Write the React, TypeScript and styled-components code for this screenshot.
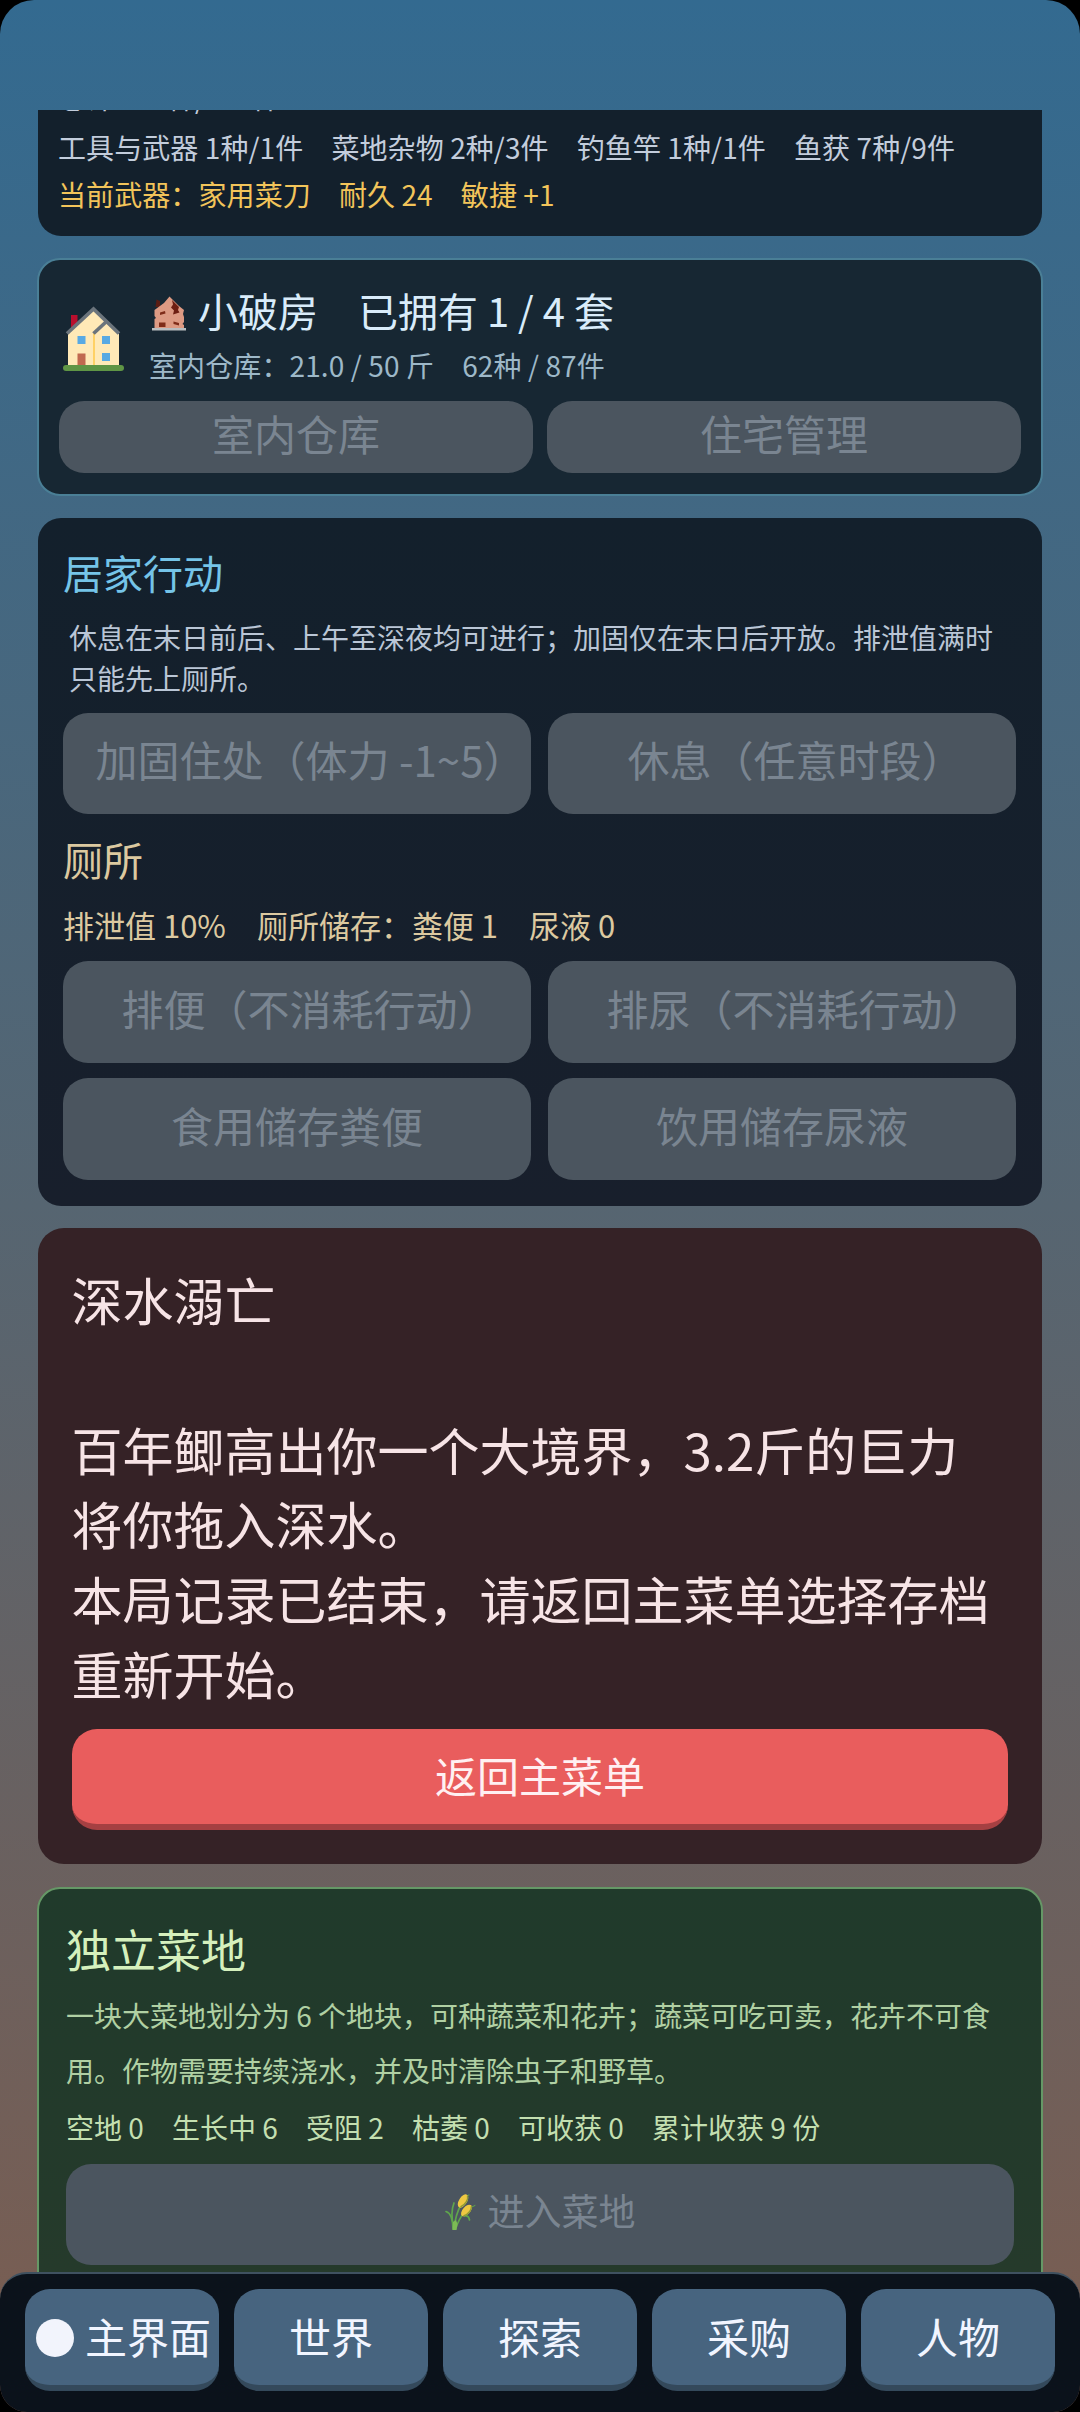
import React from "react";
import styled, { createGlobalStyle, css } from "styled-components";

const GlobalStyle = createGlobalStyle`
  *, *::before, *::after { box-sizing: border-box; }
  html, body { margin: 0; padding: 0; background: #000; }
  body { font-family: "Noto Sans CJK SC", "Noto Sans", sans-serif; }
  button { font: inherit; margin: 0; }
`;

const Screen = styled.div`
  width: 1080px;
  height: 2412px;
  display: flex;
  flex-direction: column;
  overflow: hidden;
  border-radius: 34px 34px 27px 27px;
  background: linear-gradient(180deg, #336a90 0px, #566571 1206px, #7b5d50 2412px);
`;

const Feed = styled.main`
  flex: 1;
  min-height: 0;
  overflow: hidden;
  margin-top: 110px;
  padding: 0 37px;
  display: flex;
  flex-direction: column;
  gap: 22px;
`;

const Card = styled.section`
  flex: none;
  margin: 0 1px;
  border-radius: 23px;
  background: linear-gradient(180deg, #13202c, #181f2c);
  display: flex;
  flex-direction: column;
`;

const BagCard = styled(Card)`
  height: 126px;
  overflow: hidden;
  justify-content: flex-end;
  border-radius: 0 0 23px 23px;
  padding: 0 20px 18px;
  background: #13202c;
`;

const HouseCard = styled(Card)`
  height: 238px;
  margin: 0;
  border: 2px solid #4a7f96;
  background: #172733;
  padding: 23px 20px 0;
`;

const HomeCard = styled(Card)`
  height: 688px;
  padding: 29px 26px 0 25px;
`;

const DeathCard = styled(Card)`
  height: 636px;
  border-radius: 26px;
  padding: 34px 34px 0;
  background: #352226;
`;

const FieldCard = styled(Card)`
  height: 460px;
  margin: 1px 0 0;
  border: 2px solid #659866;
  background: linear-gradient(180deg, #203a2b, #263a2b);
  padding: 32px 27px 0;
`;

const Line = styled.p<{
  $size: number;
  $lh: number;
  $color: string;
  $top?: number;
  $indent?: number;
  $track?: number;
}>`
  margin: ${(p) => p.$top ?? 0}px 0 0 ${(p) => p.$indent ?? 0}px;
  font-size: ${(p) => p.$size}px;
  line-height: ${(p) => p.$lh}px;
  letter-spacing: ${(p) => p.$track ?? 0}px;
  color: ${(p) => p.$color};
  white-space: pre;
`;

const HouseHeader = styled.div`
  display: flex;
  gap: 25px;
  padding-left: 4px;
  height: 118px;
`;

const HouseFigure = styled.div`
  width: 61px;
  height: 65px;
  margin-top: 23px;
  svg { display: block; }
`;

const HouseTitle = styled.div`
  display: flex;
  align-items: center;
  padding-left: 3px;
  gap: 12px;
  height: 54px;
`;

const ButtonRow = styled.div<{ $gap: number; $top?: number }>`
  display: grid;
  grid-template-columns: 1fr 1fr;
  gap: 15px ${(p) => p.$gap}px;
  margin-top: ${(p) => p.$top ?? 0}px;
`;

const buttonBase = css`
  display: flex;
  align-items: center;
  justify-content: center;
  border: 0;
  border-radius: 25px;
  white-space: pre;
  line-height: 1.4;
`;

const DisabledButton = styled.button<{ $h: number; $size?: number; $top?: number }>`
  ${buttonBase}
  height: ${(p) => p.$h}px;
  margin-top: ${(p) => p.$top ?? 0}px;
  padding: 0 0 8px;
  font-size: ${(p) => p.$size ?? 42}px;
  background: #4b555f;
  color: #7a8591;
`;

/* A closing full-width bracket keeps half an em of blank space; pull it back so the label is centred. */
const BracketLabel = styled.span`
  margin-right: -27px;
`;

const DangerButton = styled.button`
  ${buttonBase}
  height: 101px;
  margin-top: 18px;
  padding: 0 0 2px;
  font-size: 42px;
  color: #fff0f2;
  background: #e95d5d;
  border-bottom: 6px solid #a54042;
`;

const NavBar = styled.nav`
  flex: none;
  height: 140px;
  display: grid;
  grid-template-columns: repeat(5, 1fr);
  gap: 15px;
  padding: 15px 25px 21px;
  background: #0b121b;
  border-top: 2px solid #3f5160;
  border-radius: 27px 27px 0 0;
`;

const NavButton = styled.button<{ $active?: boolean }>`
  ${buttonBase}
  gap: 11px;
  padding: 0 0 2px ${(p) => (p.$active ? 3 : 0)}px;
  font-size: 42px;
  color: #f1f5ff;
  background: #47647f;
  border-bottom: 6px solid #34495b;
`;

const ActiveDot = styled.span`
  flex: none;
  width: 38px;
  height: 38px;
  margin-top: 3px;
  border-radius: 50%;
  background: #f2f4fc;
`;

const RuinSvg = styled.svg`
  flex: none;
  margin-top: 6px;
`;

const WheatSvg = styled.svg`
  flex: none;
  margin: 4px 12px 0 0;
`;

const HouseIcon = () => (
  <svg width="61" height="65" viewBox="0 0 61 65">
    <rect x="8" y="9" width="6.5" height="15" fill="#b90f2e" />
    <path d="M5 27 30.5 3 42 15l14 13v32H5z" fill="#ffe9b7" />
    <path d="M31 27v33" stroke="#ffcf5c" strokeWidth="1.8" />
    <path d="M4 27.500 30.500 3 56 27.500" fill="none" stroke="#6b747c" strokeWidth="3.700" strokeLinejoin="miter" />
    <path d="M30.500 27.500 43.500 15.500" stroke="#6b747c" strokeWidth="3.700" />
    <rect x="14.500" y="30" width="8" height="8" fill="#58a9e3" />
    <rect x="39" y="30" width="8" height="8" fill="#58a9e3" />
    <rect x="39" y="47" width="8" height="8" fill="#58a9e3" />
    <rect x="14.500" y="47.500" width="8" height="12" fill="#c1694f" />
    <rect x="0" y="59" width="61" height="6" rx="3" fill="#5f9545" />
  </svg>
);

const RuinIcon = () => (
  <RuinSvg width="34" height="35" viewBox="0 0 34 35">
    <path d="M4.500 3.500 8 5v6H3.500z" fill="#5a1d14" />
    <path d="M2.500 32V23l1.500-1-1.500-2v-6L12 7l5.500-6.500L22 5l5 5 5 4-1 4 1 3v5l-1.500 2 1.500 1v3z" fill="#dd9a83" />
    <path d="M20 4l7 7-1 3 1.500 2.500-6.500 2 1-4-3-3 2-3z" fill="#6e1f12" />
    <path d="M8 16.500l5-1.500.500 2.500-5.500 1.500zM7 26.500h6.500v4.500H7zM21.500 25.500l5.500 1.500v2.500l-5.500-1.500z" fill="#7f2c19" />
    <rect x="0" y="32" width="34" height="2.500" fill="#b9bdc0" />
  </RuinSvg>
);

const WheatIcon = () => (
  <WheatSvg width="31" height="37" viewBox="0 0 31 37">
    <g fill="none" stroke="#5fa64c" strokeWidth="1.700" strokeLinecap="round">
      <path d="M9 35C10 26 11 19 16 11" />
      <path d="M10.500 35C13 28 15 23 19 19" />
      <path d="M8 35C8 26 5.500 19 1 17.500" />
      <path d="M8.500 33C6 22 7 14 9 9" />
      <path d="M20 22c3-.500 4 1 4.500 4" />
      <path d="M24 14c2-.500 4-1.500 6-2.500M20 4c1-2 2-2.500 4-3" strokeWidth="1" />
    </g>
    <path d="M7.500 36 8 28l3-2 1.500 4-1 6z" fill="#7dbb55" />
    <ellipse cx="18" cy="7" rx="4" ry="7.500" transform="rotate(32 18 7)" fill="#efc842" />
    <ellipse cx="21.500" cy="16.500" rx="3.800" ry="7" transform="rotate(42 21.500 16.500)" fill="#efc842" />
    <path d="M22.500 1.500c1 4-2 9-7 11.500M26.500 12c0 4-3 8-8 10" stroke="#8f9a35" strokeWidth="1.400" fill="none" />
  </WheatSvg>
);

const tabs = ["主界面", "世界", "探索", "采购", "人物"];

export default function App() {
  return (
    <>
      <GlobalStyle />
      <Screen>
        <Feed>
          <BagCard>
            <Line $size={28} $lh={51} $color="#c3cddc">{"总计 162种/187件"}</Line>
            <Line $size={28} $lh={48} $track={0.09} $color="#c3cddc">
              {"工具与武器 1种/1件　菜地杂物 2种/3件　钓鱼竿 1种/1件　鱼获 7种/9件"}
            </Line>
            <Line $size={28} $lh={47} $track={0.09} $color="#f2c45a">{"当前武器：家用菜刀　耐久 24　敏捷 +1"}</Line>
          </BagCard>

          <HouseCard>
            <HouseHeader>
              <HouseFigure>
                <HouseIcon />
              </HouseFigure>
              <div>
                <HouseTitle>
                  <RuinIcon />
                  <Line $size={40} $lh={54} $color="#d9ecfa">{"小破房　已拥有 1 / 4 套"}</Line>
                </HouseTitle>
                <Line $size={28} $lh={36} $top={10} $track={0.11} $color="#9db8c8">
                  {"室内仓库：21.0 / 50 斤　62种 / 87件"}
                </Line>
              </div>
            </HouseHeader>
            <ButtonRow $gap={14}>
              <DisabledButton disabled $h={72}>室内仓库</DisabledButton>
              <DisabledButton disabled $h={72}>住宅管理</DisabledButton>
            </ButtonRow>
          </HouseCard>

          <HomeCard>
            <Line $size={40} $lh={50} $color="#75c4e8">居家行动</Line>
            <Line $size={28} $lh={41} $top={20} $indent={6} $color="#bac6d6">
              {"休息在末日前后、上午至深夜均可进行；加固仅在末日后开放。排泄值满时\n只能先上厕所。"}
            </Line>
            <ButtonRow $gap={17} $top={14}>
              <DisabledButton disabled $h={101}>
                <BracketLabel>加固住处（体力 -1~5）</BracketLabel>
              </DisabledButton>
              <DisabledButton disabled $h={101}>
                <BracketLabel>休息（任意时段）</BracketLabel>
              </DisabledButton>
            </ButtonRow>
            <Line $size={40} $lh={50} $top={20} $color="#dcc9a0">厕所</Line>
            <Line $size={31} $lh={42} $top={20} $color="#dcc9a0">{"排泄值 10%　厕所储存：粪便 1　尿液 0"}</Line>
            <ButtonRow $gap={17} $top={15}>
              <DisabledButton disabled $h={102}>
                <BracketLabel>排便（不消耗行动）</BracketLabel>
              </DisabledButton>
              <DisabledButton disabled $h={102}>
                <BracketLabel>排尿（不消耗行动）</BracketLabel>
              </DisabledButton>
              <DisabledButton disabled $h={102}>食用储存粪便</DisabledButton>
              <DisabledButton disabled $h={102}>饮用储存尿液</DisabledButton>
            </ButtonRow>
          </HomeCard>

          <DeathCard>
            <Line $size={51} $lh={74.8} $indent={-0.5} $color="#f7e4e6">
              {"深水溺亡\n\n百年鲫高出你一个大境界，3.2斤的巨力\n将你拖入深水。\n本局记录已结束，请返回主菜单选择存档\n重新开始。"}
            </Line>
            <DangerButton>返回主菜单</DangerButton>
          </DeathCard>

          <FieldCard>
            <Line $size={45} $lh={56} $color="#d5f0bd">独立菜地</Line>
            <Line $size={28} $lh={55} $top={11} $color="#b0d0a3">
              {"一块大菜地划分为 6 个地块，可种蔬菜和花卉；蔬菜可吃可卖，花卉不可食\n用。作物需要持续浇水，并及时清除虫子和野草。"}
            </Line>
            <Line $size={28} $lh={36} $top={11} $track={0.03} $color="#c3dfb0">
              {"空地 0　生长中 6　受阻 2　枯萎 0　可收获 0　累计收获 9 份"}
            </Line>
            <DisabledButton disabled $h={101} $size={37} $top={19}>
              <WheatIcon />
              进入菜地
            </DisabledButton>
          </FieldCard>
        </Feed>

        <NavBar>
          {tabs.map((tab, i) => (
            <NavButton key={tab} $active={i === 0}>
              {i === 0 && <ActiveDot />}
              {tab}
            </NavButton>
          ))}
        </NavBar>
      </Screen>
    </>
  );
}
